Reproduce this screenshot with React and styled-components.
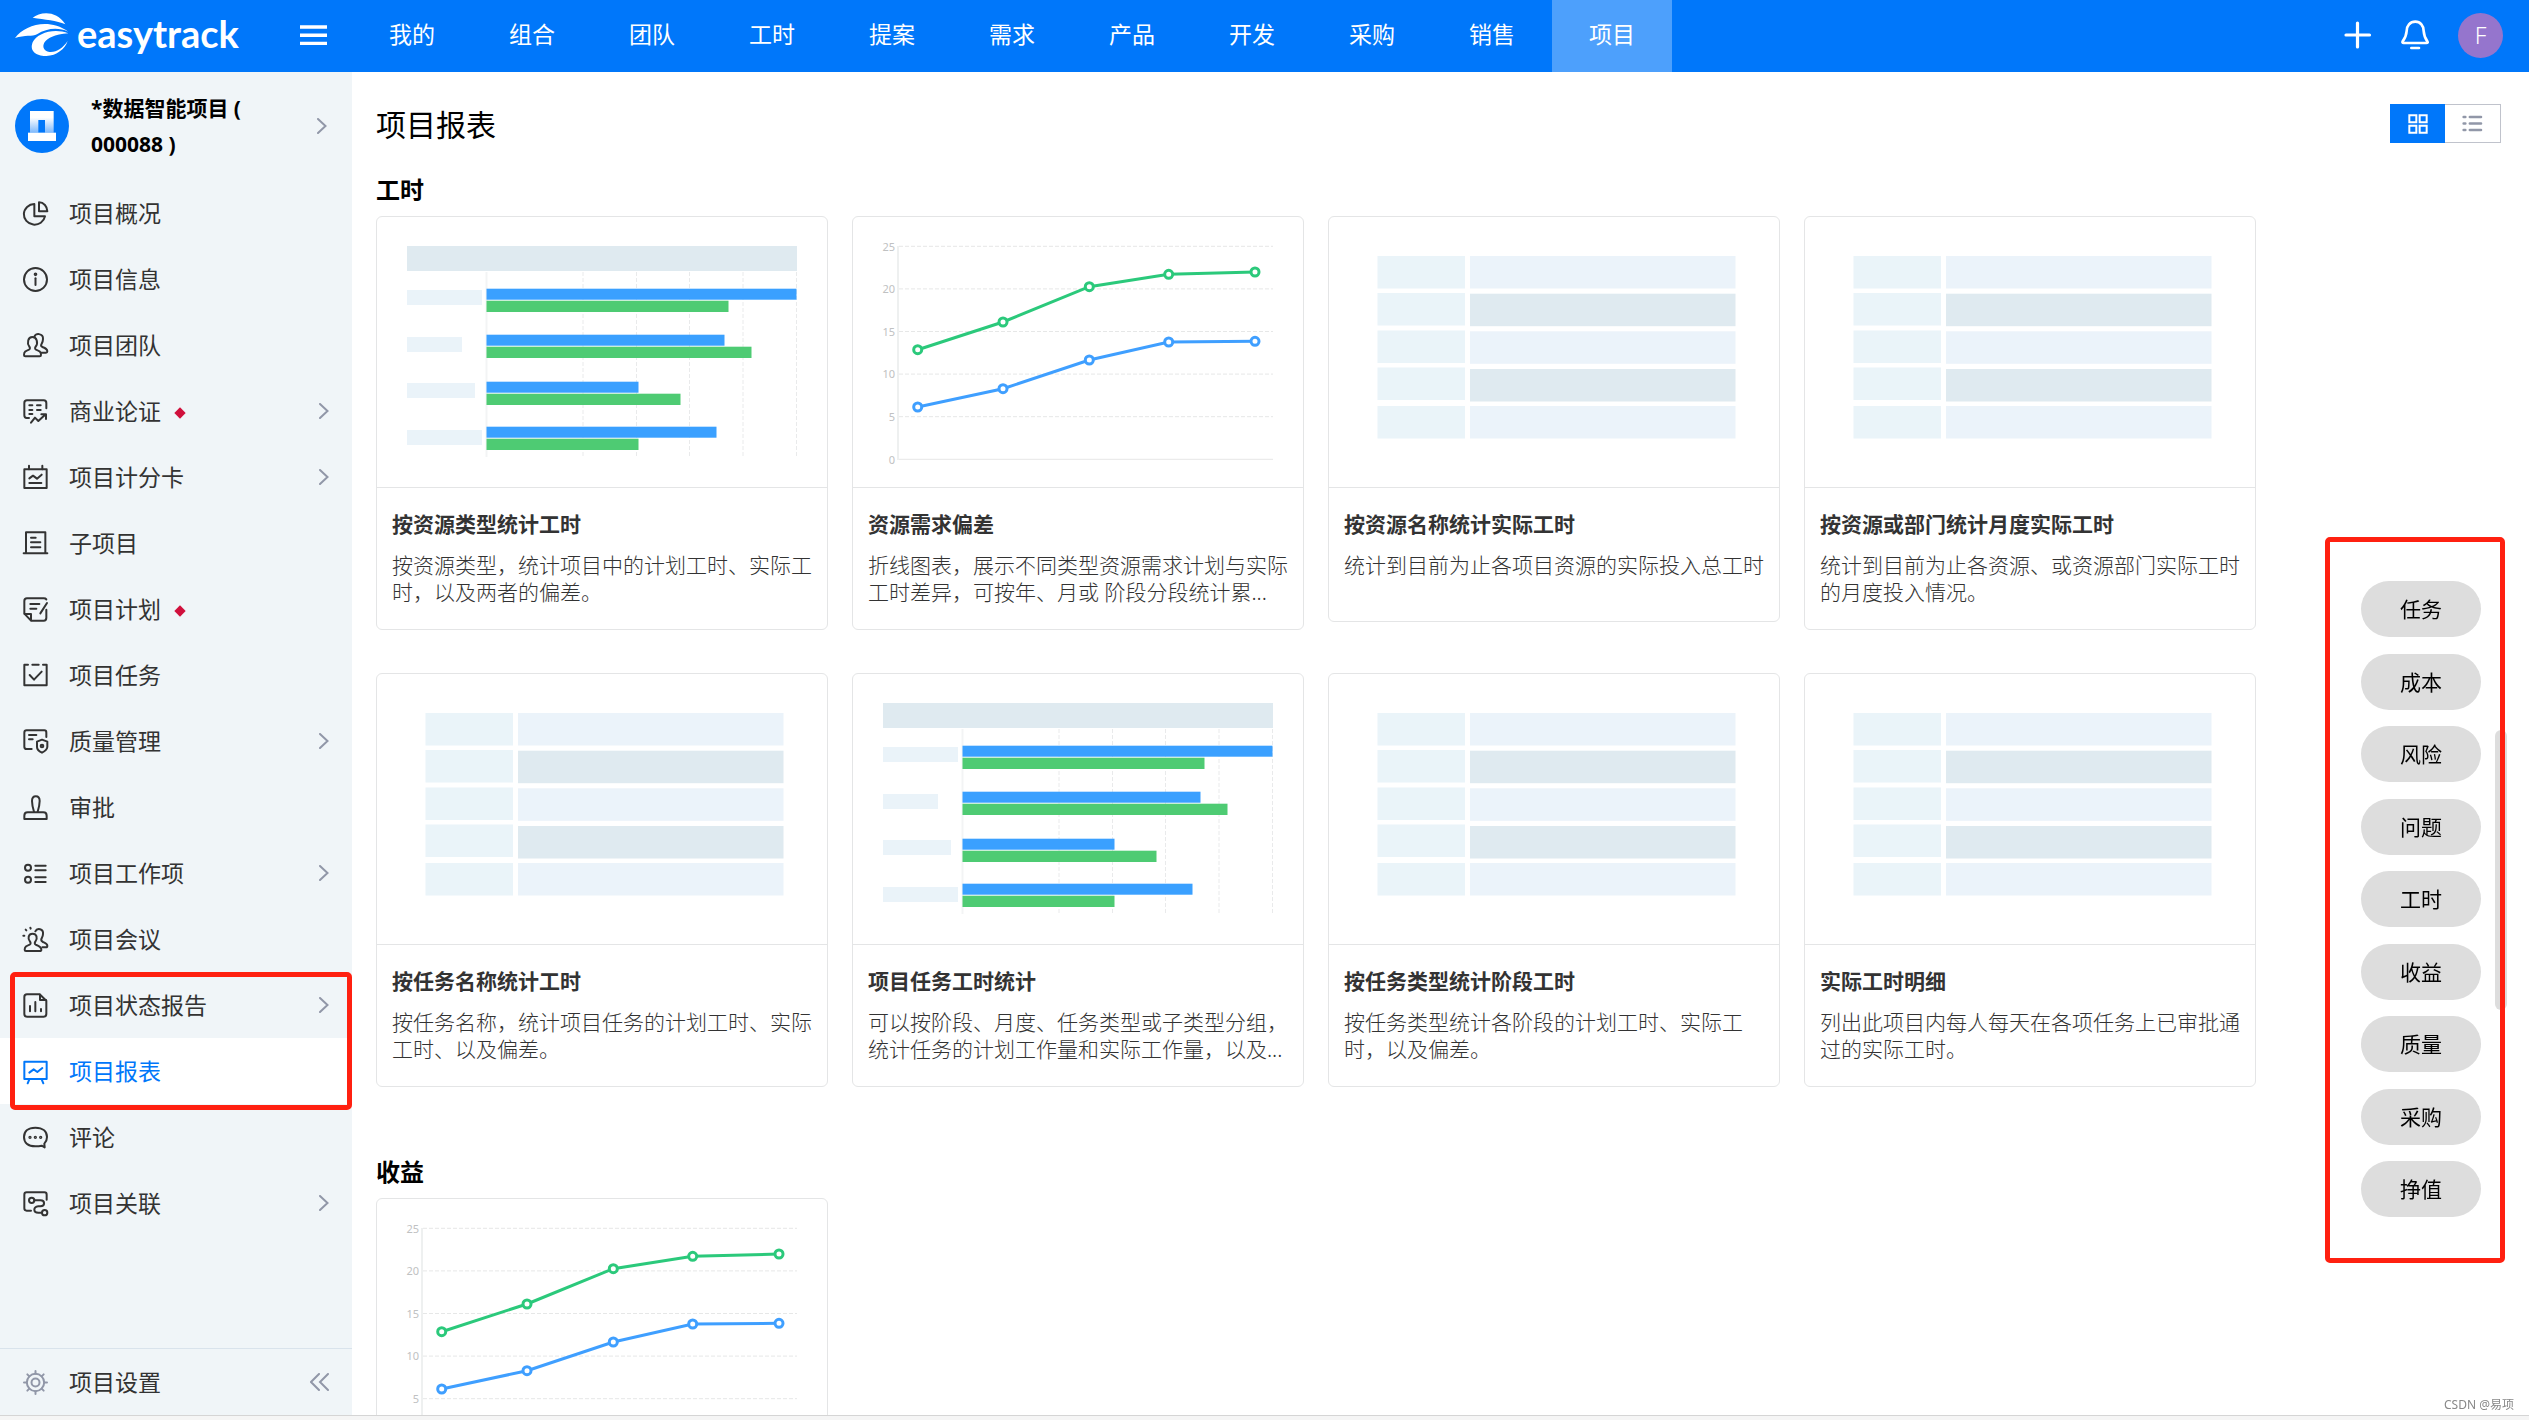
import React, { useState } from 'react'
import styled, { createGlobalStyle } from 'styled-components';

const topMenus = ['我的', '组合', '团队', '工时', '提案', '需求', '产品', '开发', '采购', '销售', '项目'];

const sideMenus = [
  { icon: 'pie', label: '项目概况' },
  { icon: 'info', label: '项目信息' },
  { icon: 'team', label: '项目团队' },
  { icon: 'business', label: '商业论证', dot: true, arrow: true },
  { icon: 'score', label: '项目计分卡', arrow: true },
  { icon: 'sub', label: '子项目' },
  { icon: 'plan', label: '项目计划', dot: true },
  { icon: 'task', label: '项目任务' },
  { icon: 'quality', label: '质量管理', arrow: true },
  { icon: 'approve', label: '审批' },
  { icon: 'items', label: '项目工作项', arrow: true },
  { icon: 'meeting', label: '项目会议' },
];
const markedMenus = [
  { icon: 'report', label: '项目状态报告', arrow: true },
  { icon: 'board', label: '项目报表' },
];
const lastMenus = [
  { icon: 'comment', label: '评论' },
  { icon: 'relation', label: '项目关联', arrow: true },
];

const sections = [
  {
    title: '工时',
    reports: [
      { chart: 'bar', name: '按资源类型统计工时', desc: '按资源类型，统计项目中的计划工时、实际工时，以及两者的偏差。' },
      { chart: 'line', name: '资源需求偏差', desc: '折线图表，展示不同类型资源需求计划与实际工时差异，可按年、月或 阶段分段统计累...' },
      { chart: 'table', name: '按资源名称统计实际工时', desc: '统计到目前为止各项目资源的实际投入总工时' },
      { chart: 'table', name: '按资源或部门统计月度实际工时', desc: '统计到目前为止各资源、或资源部门实际工时的月度投入情况。' },
      { chart: 'table', name: '按任务名称统计工时', desc: '按任务名称，统计项目任务的计划工时、实际工时、以及偏差。' },
      { chart: 'bar', name: '项目任务工时统计', desc: '可以按阶段、月度、任务类型或子类型分组，统计任务的计划工作量和实际工作量，以及...' },
      { chart: 'table', name: '按任务类型统计阶段工时', desc: '按任务类型统计各阶段的计划工时、实际工时，以及偏差。' },
      { chart: 'table', name: '实际工时明细', desc: '列出此项目内每人每天在各项任务上已审批通过的实际工时。' },
    ],
  },
  {
    title: '收益',
    reports: [
      { chart: 'line' },
    ],
  },
];

const anchors = ['任务', '成本', '风险', '问题', '工时', '收益', '质量', '采购', '挣值'];

const icons = {
  pie: <><path d="M34 9A32 31 0 1 0 66 46H34Z" /><path d="M48 4V31H73C73 16 62 4 48 4Z" /></>,
  info: <><circle cx="37.5" cy="37.5" r="34.5" /><path d="M37.5 34V54" /><circle cx="37.5" cy="22" r="2.5" /></>,
  team: <>
    <path d="M3 66C3 56 8 54 18 50C22 48 21 44 19 41C11 30 15 12 28 12C42 12 46 30 38 41C36 44 35 48 39 50C49 54 54 56 54 66Q54 70 50 70H7Q3 70 3 66Z" />
    <path d="M34 12C36 -1 61 0 60 18C60 26 57 30 55 34C53 38 55 40 58 42C68 46 73 48 73 55Q73 59 69 59H54" />
  </>,
  business: <>
    <path d="M18 57H11Q4 57 4 49V12Q4 4 12 4H62Q70 4 70 12V28" />
    <path d="M19 19H28M42 19H53M19 33H28M42 33H53M19 45H28" />
    <path d="M24 71L36 56L46 66L68 46M55 46H69V60" />
  </>,
  score: <><path d="M4 13H71V69H4Z" /><path d="M18 2V13M58 2V13M19 40L30 32L42 41L56 29M19 54H55" /></>,
  sub: <><path d="M9 66V4H67V66M2 67H73" /><path d="M24 20H38M24 34H52M24 49H52" /></>,
  plan: <>
    <path d="M70 7Q68 4 62 4H12Q4 4 4 12V50L24 71H62Q70 71 70 62V38" />
    <path d="M5 51H24V70M22 21H49M22 35H40M72 18L52 49" />
  </>,
  task: <><path d="M15 5H4V67H71V5H60M28 5H47" /><path d="M20 36L33 50L56 26" /></>,
  quality: <>
    <path d="M26 60H11Q4 60 4 53V11Q4 4 11 4H64Q70 4 70 11V24M18 18H40M18 31H29" />
    <path d="M57 32L73 38V54Q72 64 57 71Q42 64 42 54V38Z" /><circle cx="57" cy="51" r="4" />
  </>,
  approve: <><path d="M33 50C30 40 27 28 27 18C27 -1 50 -1 50 18C50 28 47 40 44 50" /><path d="M4 72V62Q4 52 14 52H61Q71 52 71 62V72Z" /></>,
  items: <><circle cx="15" cy="20" r="9" /><circle cx="15" cy="56" r="9" /><path d="M37 14H68M37 28H68M37 49H68M37 63H68" /></>,
  meeting: <>
    <path d="M5 68C5 59 10 57 20 53C24 51 23 47 21 44C13 34 16 20 29 20C41 20 45 34 37 44C35 47 34 51 38 53C48 57 55 59 55 68Q55 72 50 72H9Q5 72 5 68Z" />
    <path d="M37 13C42 2 62 4 60 21C60 28 57 32 55 36C54 40 56 43 60 45C69 49 73 50 73 56Q73 61 69 61H58" />
    <path d="M1 26H4M8 8L10 10M22 2L23 5" />
  </>,
  report: <><path d="M50 4H12Q4 4 4 12V63Q4 71 12 71H62Q70 71 70 63V23Z" /><path d="M51 5V21H69M21 39V55M37 27V55M54 48V55" /></>,
  board: <><path d="M4 8H71V60H4Z" /><path d="M19 61L14 73M56 61L61 73M19 41L32 31L43 39L58 27" /></>,
  comment: <>
    <path d="M37 8C14 8 3 20 3 36C3 54 16 64 37 64Q48 64 56 62L65 67L64 56Q72 48 72 36C72 20 60 8 37 8Z" />
    <circle cx="21" cy="37" r="2" /><circle cx="37" cy="37" r="2" /><circle cx="53" cy="37" r="2" />
  </>,
  relation: <>
    <path d="M24 59H11Q4 59 4 52V11Q4 4 11 4H64Q71 4 71 11V26" />
    <circle cx="26" cy="28" r="8" /><path d="M34 28H52C67 28 67 45 52 46H46C30 48 30 65 46 65H56" /><circle cx="65" cy="65" r="8" />
  </>,
  gear: <>
    <circle cx="37.5" cy="37.5" r="26" /><circle cx="37.5" cy="37.5" r="12" />
    <path d="M37.5 3V11M37.5 64V72M3 37.5H11M64 37.5H72M13 13L19 19M56 56L62 62M62 13L56 19M19 56L13 62" />
  </>,
};

function Icon({ name }) {
  return <MenuIcon viewBox="0 0 75 75" aria-hidden="true">{icons[name]}</MenuIcon>
}

function BarChart() {
  const rows = [
    { y: 72, label: 75, plan: 310, real: 242 },
    { y: 118, label: 55, plan: 238, real: 265 },
    { y: 165, label: 68, plan: 152, real: 194 },
    { y: 210, label: 75, plan: 230, real: 152 },
  ];
  return (
    <svg viewBox="0 0 450 270" width="100%" height="270">
      <rect x="30" y="29" width="390" height="25" fill="#dfeaf0" />
      <path d="M109.5 55V240" stroke="#f3f4f5" strokeWidth="2" />
      <path d="M206 55V241M259.5 55V241M312.5 55V241M366 55V241M419.5 55V241" stroke="#e9eaeb" strokeDasharray="4 2" />
      {rows.map((row, i) => (
        <g key={row.y}>
          <rect x="30" y={73 + Math.round(i * 46.7)} width={row.label} height="15" fill="#eaf3f9" />
          <rect x="109.5" y={row.y - 0.3} width={row.plan} height="11" fill="#3aa0ff" />
          <rect x="109.5" y={row.y + 11.7} width={row.real} height="11.3" fill="#4ecb73" />
        </g>
      ))}
    </svg>
  )
}

function LineChart() {
  const xs = [64.7, 150, 236.3, 315.7, 402];
  const lines = [
    { color: '#2bc97b', ys: [132.7, 105, 69.7, 57.3, 55] },
    { color: '#3f9fff', ys: [190, 171.7, 143, 125, 124.3] },
  ];
  return (
    <svg viewBox="0 0 450 270" width="100%" height="270">
      {[25, 20, 15, 10, 5, 0].map((n, i) => (
        <g key={n}>
          <AxisText x="42" y={33.5 + i * 42.6} textAnchor="end">{n}</AxisText>
          <path d={`M46 ${29.3 + i * 42.6}H420`} stroke="#e6e7e7" strokeDasharray={n === 0 ? 'none' : '4 2'} />
        </g>
      ))}
      <path d="M45 29V243" stroke="#eef0f0" strokeWidth="2" />
      {lines.map((line) => (
        <g key={line.color} fill="none" stroke={line.color} strokeWidth="3">
          <polyline points={line.ys.map((y, i) => `${xs[i]},${y}`).join(' ')} />
          {line.ys.map((y, i) => <circle key={i} cx={xs[i]} cy={y} r="4" fill="#fff" />)}
        </g>
      ))}
    </svg>
  )
}

function TableChart() {
  return (
    <svg viewBox="0 0 450 270" width="100%" height="270">
      {[39, 76, 113.5, 150.5, 189].map((y) => <rect key={y} x="48.5" y={y} width="87.5" height="32.5" fill="#eaf4f9" />)}
      {[39, 76.7, 114.3, 152, 189].map((y, i) => (
        <rect key={y} x="141" y={y} width="265.5" height="32.5" fill={i % 2 ? '#dfeaf0' : '#ebf3fa'} />
      ))}
    </svg>
  )
}

const charts = { bar: BarChart, line: LineChart, table: TableChart };

function SideItem({ item, active, onSelect }) {
  return (
    <MenuItem type="button" $active={active} onClick={() => onSelect(item.label)}>
      <Icon name={item.icon} />
      <span>{item.label}</span>
      {item.dot && <Diamond />}
      {item.arrow && <Chevron />}
    </MenuItem>
  )
}

function Chevron() {
  return (
    <ArrowIcon viewBox="0 0 10 16" width="10" height="16" aria-hidden="true">
      <path d="M1 1L8.5 8L1 15" />
    </ArrowIcon>
  )
}

function Header() {
  return (
    <TopBar>
      <Brand>
        <Logo href="#">
          <svg viewBox="0 0 162 132" width="54" height="44" fill="#fff" aria-hidden="true">
            <path d="M53 14C75 -4 124 -10 151 34C125 22 90 20 53 14Z" />
            <path d="M0 75C30 36 100 14 160 56C128 42 95 46 66 64C52 71 30 66 0 75Z" />
            <path d="M160 61C118 44 66 60 53 88C42 116 66 130 94 129C125 128 150 108 158 84C143 106 124 119 103 117C72 112 76 66 160 61Z" />
          </svg>
          <span>easytrack</span>
        </Logo>
        <IconButton type="button" aria-label="菜单">
          <svg viewBox="0 0 27 20" width="27" height="20" stroke="#fff" strokeWidth="3.4">
            <path d="M0 2H27M0 10.2H27M0 18.4H27" />
          </svg>
        </IconButton>
      </Brand>
      <TopNav>
        {topMenus.map((menu) => <TopLink key={menu} href="#" $active={menu === '项目'}>{menu}</TopLink>)}
      </TopNav>
      <Tools>
        <IconButton type="button" aria-label="新建">
          <svg viewBox="0 0 28 28" width="28" height="28" stroke="#fff" strokeWidth="3.2" strokeLinecap="round">
            <path d="M13.5 2V26M2 14H25.5" />
          </svg>
        </IconButton>
        <IconButton type="button" aria-label="通知">
          <svg viewBox="0 0 84 90" width="28" height="30" fill="none" stroke="#fff" strokeWidth="8" strokeLinecap="round" strokeLinejoin="round">
            <path d="M43 5C27 5 17 17 17 33C16 46 12 55 5 64Q3 69 8 69H76Q82 69 79 64C72 55 69 46 68 33C68 17 58 5 43 5Z" />
            <path d="M31 84H54" />
          </svg>
        </IconButton>
        <Avatar type="button">F</Avatar>
      </Tools>
    </TopBar>
  )
}

function App() {

  const [current, setCurrent] = useState('项目报表');
  const [view, setView] = useState('grid');

  const renderItem = (item) => (
    <SideItem key={item.label} item={item} active={current === item.label} onSelect={setCurrent} />
  );

  return (
    <Page>
      <GlobalStyle />
      <Header />
      <Body>
        <Sidebar>
          <ProjectHead type="button">
            <ProjectLogo>
              <svg viewBox="0 0 84 90" width="28" height="30" aria-hidden="true">
                <defs>
                  <linearGradient id="tower" x1="0" y1="0" x2="0" y2="1">
                    <stop offset="0.3" stopColor="#fff" />
                    <stop offset="1" stopColor="#7db8fc" />
                  </linearGradient>
                </defs>
                <path d="M6 0H77V65H51V27H31V65H6Z" fill="url(#tower)" />
                <rect y="65" width="84" height="25" fill="#fff" />
              </svg>
            </ProjectLogo>
            <ProjectName>*数据智能项目 ( 000088 )</ProjectName>
            <Chevron />
          </ProjectHead>
          <Menu>
            {sideMenus.map(renderItem)}
            <Marked>{markedMenus.map(renderItem)}</Marked>
            {lastMenus.map(renderItem)}
          </Menu>
          <Setting type="button">
            <Icon name="gear" />
            <span>项目设置</span>
            <ArrowIcon viewBox="0 0 19 18" width="19" height="18" aria-hidden="true">
              <path d="M9 1L1 9L9 17M18 1L10 9L18 17" />
            </ArrowIcon>
          </Setting>
        </Sidebar>
        <Main>
          <TitleBar>
            <h1>项目报表</h1>
            <Switch>
              <ViewButton type="button" aria-label="卡片" $active={view === 'grid'} onClick={() => setView('grid')}>
                <svg viewBox="0 0 60 60" width="20" height="20" fill="none" stroke="currentColor" strokeWidth="6">
                  <path d="M4 4H25V25H4ZM35 4H56V25H35ZM4 35H25V56H4ZM35 35H56V56H35Z" />
                </svg>
              </ViewButton>
              <ViewButton type="button" aria-label="列表" $active={view === 'list'} onClick={() => setView('list')}>
                <svg viewBox="0 0 62 52" width="21" height="17" fill="none" stroke="currentColor" strokeWidth="8" strokeLinecap="round">
                  <path d="M4 6H9M23 6H57M4 26H9M23 26H57M4 46H9M23 46H57" />
                </svg>
              </ViewButton>
            </Switch>
          </TitleBar>
          {sections.map((section) => (
            <Section key={section.title}>
              <h2>{section.title}</h2>
              <Cards>
                {section.reports.map((report, i) => {
                  const Chart = charts[report.chart];
                  return (
                    <Card key={i}>
                      <Preview><Chart /></Preview>
                      {report.name && (
                        <CardBody>
                          <h3>{report.name}</h3>
                          <p>{report.desc}</p>
                        </CardBody>
                      )}
                    </Card>
                  )
                })}
              </Cards>
            </Section>
          ))}
          <ScrollThumb />
        </Main>
      </Body>
      <BottomEdge />
      <Anchors aria-label="报表分类">
        {anchors.map((name) => <Pill key={name} type="button">{name}</Pill>)}
      </Anchors>
      <Watermark>CSDN @易项</Watermark>
    </Page>
  )
}

const GlobalStyle = createGlobalStyle`
  * {
    box-sizing: border-box;
  }
  body {
    margin: 0;
    font-family: "Noto Sans", "Noto Sans CJK SC", sans-serif;
    font-weight: 400;
    color: #000;
    background: #fff;
  }
  button {
    font: inherit;
    color: inherit;
    border: none;
    background: none;
    padding: 0;
    cursor: pointer;
  }
  a {
    color: inherit;
    text-decoration: none;
  }
  h1, h2, h3, p {
    margin: 0;
  }
`;
const Page = styled.div`
  display: flex;
  flex-direction: column;
  height: 100vh;
  overflow: hidden;
`;
const TopBar = styled.header`
  display: flex;
  flex: none;
  height: 72px;
  color: #fff;
  background: #0077fa;
`;
const Brand = styled.div`
  display: flex;
  align-items: center;
  justify-content: space-between;
  width: 352px;
  padding: 0 25px 2px 15px;
`;
const Logo = styled.a`
  display: flex;
  align-items: flex-start;
  gap: 8px;
  font-family: Lato, sans-serif;
  font-size: 38px;
  font-weight: 700;
  line-height: 40px;
`;
const IconButton = styled.button`
  display: flex;
`;
const TopNav = styled.nav`
  display: flex;
`;
const TopLink = styled.a`
  width: 120px;
  font-size: 23px;
  line-height: 68px;
  text-align: center;
  background: ${(props) => (props.$active ? '#4da0fc' : 'transparent')};
`;
const Tools = styled.div`
  display: flex;
  align-items: center;
  gap: 29px;
  margin-left: auto;
  padding: 0 26px 2px 0;
`;
const Avatar = styled.button`
  width: 45px;
  height: 45px;
  border-radius: 50%;
  font-size: 23px;
  font-weight: 300;
  line-height: 45px;
  background: #9575cd;
`;
const Body = styled.div`
  display: flex;
  flex: 1;
  min-height: 0;
`;
const Sidebar = styled.aside`
  display: flex;
  flex-direction: column;
  flex: none;
  width: 352px;
  background: #f0f5f8;
`;
const ProjectHead = styled.button`
  display: flex;
  align-items: center;
  flex: none;
  height: 108px;
  padding: 0 25px 0 15px;
  text-align: left;
`;
const ProjectLogo = styled.span`
  display: flex;
  align-items: center;
  justify-content: center;
  width: 54px;
  height: 54px;
  border-radius: 50%;
  background: #0077fa;
`;
const ProjectName = styled.strong`
  width: 170px;
  margin-left: 22px;
  font-size: 21px;
  font-weight: 700;
  line-height: 36px;
`;
const Menu = styled.nav`
  display: flex;
  flex-direction: column;
  flex: 1;
`;
const MenuItem = styled.button`
  display: flex;
  align-items: center;
  width: 100%;
  height: 66px;
  padding: 0 23px;
  font-size: 23px;
  line-height: 36px;
  color: ${(props) => (props.$active ? '#0077fa' : '#333')};
  background: ${(props) => (props.$active ? '#fff' : 'transparent')};
  span {
    padding-bottom: 1px;
  }
`;
const MenuIcon = styled.svg`
  width: 25px;
  height: 25px;
  margin-right: 21px;
  overflow: visible;
  fill: none;
  stroke: currentColor;
  stroke-width: 6;
  stroke-linecap: round;
  stroke-linejoin: round;
`;
const Diamond = styled.i`
  width: 8px;
  height: 8px;
  margin: 3px 0 0 15px;
  background: #d0103c;
  transform: rotate(45deg);
`;
const ArrowIcon = styled.svg`
  margin-left: auto;
  fill: none;
  stroke: #9197a8;
  stroke-width: 2;
  stroke-linecap: round;
`;
const Marked = styled.div`
  position: relative;
  &::after{
    content: "";
    position: absolute;
    top: 0;
    right: 0;
    bottom: -6px;
    left: 10px;
    border: 5px solid #ff2010;
    border-radius: 5px;
    pointer-events: none;
  }
`;
const Setting = styled(MenuItem)`
  flex: none;
  height: 67px;
  border-top: 1px solid #d9e3ec;
  svg:first-child {
    color: #9197a8;
  }
`;
const Main = styled.main`
  position: relative;
  flex: 1;
  min-width: 0;
  padding: 32px 28px 0 24px;
  overflow: hidden;
`;
const TitleBar = styled.div`
  display: flex;
  align-items: flex-start;
  justify-content: space-between;
  height: 40px;
  h1 {
    font-size: 30px;
    font-weight: 400;
    line-height: 42px;
  }
`;
const Switch = styled.div`
  display: flex;
`;
const ViewButton = styled.button`
  display: flex;
  align-items: center;
  justify-content: center;
  width: 56px;
  height: 39px;
  border: 1px solid ${(props) => (props.$active ? '#0077fa' : '#c0c3cc')};
  color: ${(props) => (props.$active ? '#fff' : '#9197a8')};
  background: ${(props) => (props.$active ? '#0077fa' : '#fff')};
  & + & {
    margin-left: -1px;
    border-left: none;
  }
`;
const Section = styled.section`
  margin-bottom: 39px;
  padding: 28px 245px 0 0;
  h2 {
    margin-bottom: 8px;
    font-size: 24px;
    font-weight: 700;
    line-height: 36px;
  }
`;
const Cards = styled.div`
  display: grid;
  grid-template-columns: repeat(auto-fill, minmax(452px, 1fr));
  align-items: start;
  gap: 43px 24px;
`;
const Card = styled.article`
  border: 1px solid #e4e5e6;
  border-radius: 6px;
`;
const Preview = styled.div`
  height: 271px;
  border-bottom: 1px solid #e4e5e6;
`;
const CardBody = styled.div`
  padding: 18px 15px 23px;
  font-size: 21px;
  h3 {
    margin-bottom: 10px;
    font-size: 21px;
    line-height: 36px;
    color: #333;
  }
  p {
    min-height: 46px;
    font-weight: 300;
    line-height: 27px;
    color: #333;
  }
`;
const AxisText = styled.text`
  font-size: 11px;
  fill: #c0c1c2;
`;
const ScrollThumb = styled.div`
  position: absolute;
  top: 658px;
  right: 22px;
  width: 12px;
  height: 280px;
  border-radius: 6px;
  background: #ddd;
`;
const BottomEdge = styled.div`
  flex: none;
  height: 5px;
  border-top: 1px solid #d5d5d5;
  background: #f5f5f5;
`;
const Anchors = styled.nav`
  position: fixed;
  top: 537px;
  right: 24px;
  display: flex;
  flex-direction: column;
  justify-content: space-between;
  height: 726px;
  padding: 39px 19px 41px 31px;
  border: 5px solid #ff2010;
  border-radius: 5px;
`;
const Pill = styled.button`
  width: 120px;
  height: 56px;
  border-radius: 28px;
  font-size: 21px;
  line-height: 56px;
  background: #ddd;
`;
const Watermark = styled.span`
  position: fixed;
  right: 15px;
  bottom: 5px;
  font-size: 12px;
  line-height: 20px;
  color: #888;
`;

export default App
